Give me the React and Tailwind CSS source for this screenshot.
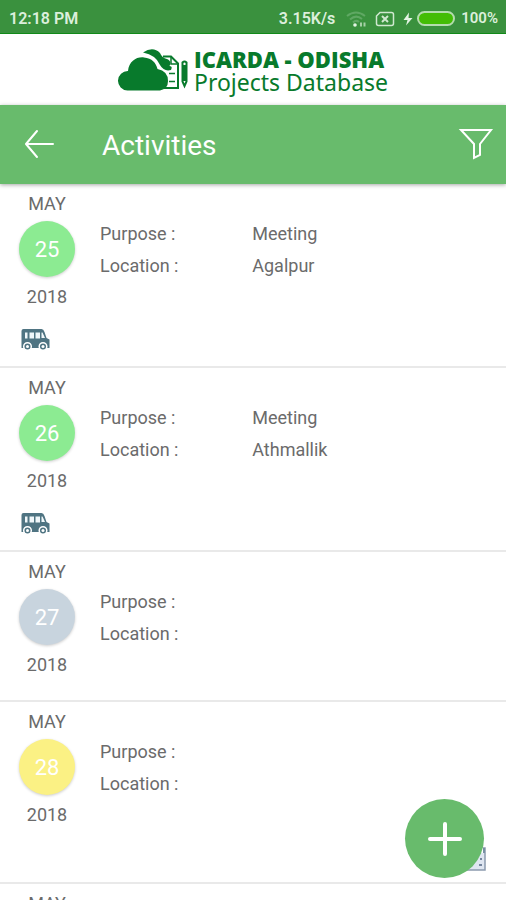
import React from "react";

const activities = [
  { day: 25, color: "bg-[#8ceb92]", purpose: "Meeting", location: "Agalpur", icon: "van" },
  { day: 26, color: "bg-[#8ceb92]", purpose: "Meeting", location: "Athmallik", icon: "van" },
  { day: 27, color: "bg-[#c8d4de]", purpose: "", location: "", icon: null },
  { day: 28, color: "bg-[#fbf184]", purpose: "", location: "", icon: "calendar" },
  { day: 29, color: "bg-[#8ceb92]", purpose: "", location: "", icon: null },
];

function StatusBar() {
  return (
    <div className="flex h-[34px] shrink-0 items-center justify-between border-b border-[#118a18] bg-[#3a913e] pt-1 pr-2 pl-[9px] text-base font-semibold text-[#dcefdc]">
      <span>12:18 PM</span>
      <div className="flex items-center">
        <span>3.15K/s</span>
        <svg className="ml-2.5 h-4 w-6" viewBox="0 0 24 16" fill="none" aria-hidden="true">
          <g stroke="#5fa863" strokeWidth="2">
            <path d="M2 5Q11-2 20 5" />
            <path d="M5 8.500Q11 3 17 8" />
            <path d="M8 11.500Q11 8.500 14 11" />
          </g>
          <circle cx="10" cy="14" r="1.800" fill="#e4f4e4" />
          <path d="M16 11.500v4M19.500 11.500v4" stroke="#a5d0a6" strokeWidth="2" />
        </svg>
        <svg className="ml-1.5 h-4 w-5" viewBox="0 0 20 16" fill="none" stroke="#d0e8d0" aria-hidden="true">
          <path d="M5 1.500h11.500a2 2 0 0 1 2 2v9a2 2 0 0 1-2 2h-13a2 2 0 0 1-2-2V5z" strokeWidth="1.500" />
          <path d="M7 5l6 6M13 5l-6 6" strokeWidth="2" />
        </svg>
        <svg className="ml-2 h-4 w-[10px]" viewBox="0 0 10 16" fill="#e4f4e4" aria-hidden="true">
          <path d="M6 1.500L.5 9h4L3 14.500 9.500 7H5.500z" />
        </svg>
        <div className="ml-1 h-[15px] w-[38px] rounded-full border-2 border-[#b4dcae] bg-[#43bd05]" />
        <span className="ml-1.5 text-[15px]">100%</span>
      </div>
    </div>
  );
}

function CloudLogo() {
  return (
    <svg className="h-[42px] w-[70px]" viewBox="0 0 70 42" aria-hidden="true">
      <path d="M45 7.500h8l7 7v24.500H46" fill="none" stroke="#087a2c" strokeWidth="2" />
      <path d="M53 8v7h7" fill="none" stroke="#087a2c" strokeWidth="1.500" />
      <path d="M51 24.500h6M51 32.500h6" stroke="#087a2c" strokeWidth="1.500" />
      <path d="M25 3.500Q35-3 42 4Q44 9 49 10Q54 12 51.500 17Q55 17 53 21Q46 23 42 16Q38 6 25 3.500z" fill="#087a2c" />
      <path d="M9.500 41.500A9.500 9.500 0 0 1 10 22C11 12 19 7.500 26 8.500C34 9 38 14 39.500 20Q50 22 50 32Q50 40 42 41.500z" fill="#087a2c" />
      <path d="M64.500 16V13.500q2-2 4 0v19L66.500 37l-2-4.500zM64.500 17h4M64.500 31h4M66.500 18v12" fill="none" stroke="#087a2c" strokeWidth="2" />
    </svg>
  );
}

function Brand() {
  return (
    <header className="flex h-[71px] shrink-0 items-center justify-center gap-[6px] bg-white text-[#087a2c]">
      <CloudLogo />
      <div className="flex flex-col pt-[2px]">
        <span className="font-['Open_Sans',sans-serif] text-[22px] leading-[22px] font-extrabold">ICARDA - ODISHA</span>
        <span className="font-['Noto_Sans',sans-serif] text-[23px] leading-[24px]">Projects Database</span>
      </div>
    </header>
  );
}

function AppBar() {
  return (
    <div className="relative z-10 flex h-[79px] shrink-0 items-center bg-[#68bb6c] pr-3 pl-6 text-white shadow-[0_1px_4px_rgba(0,0,0,0.35)]">
      <button type="button" aria-label="Back">
        <svg className="h-8 w-8" viewBox="0 0 32 32" fill="none" stroke="currentColor" strokeWidth="2" strokeLinecap="round" strokeLinejoin="round">
          <path d="M29 15H2M13 2L2 15l11 13" />
        </svg>
      </button>
      <h1 className="ml-[46px] flex-1 pt-0.5 text-[28px]">Activities</h1>
      <button type="button" aria-label="Filter">
        <svg className="h-9 w-9" viewBox="0 0 36 36" fill="none" stroke="currentColor" strokeWidth="2" strokeLinejoin="miter">
          <path d="M3 3h30L22 17v11l-6 3V17z" />
        </svg>
      </button>
    </div>
  );
}

function VanIcon() {
  return (
    <svg className="h-[22px] w-[30px]" viewBox="0 0 30 22" role="img" aria-label="Travel">
      <path d="M1.500 2q0-2 2-2h18q2 0 3 3l2 6 3 1.500V19h-28z" fill="#4f7482" />
      <path d="M5 3.500h2.500v6H5zM9.500 3.500H14v6H9.500zM15.500 3.500H20v6h-4.500zM21.500 3.500h1L25 9h-3.500z" fill="#f0f7fa" />
      <g fill="#4f7482" stroke="#fff" strokeWidth="1.500">
        <circle cx="7.500" cy="17.500" r="3.800" />
        <circle cx="23" cy="17.500" r="3.800" />
      </g>
      <circle cx="7.500" cy="17.500" r="1.500" fill="#fff" />
      <circle cx="23" cy="17.500" r="1.500" fill="#fff" />
    </svg>
  );
}

function CalendarIcon() {
  return (
    <svg className="h-6 w-6" viewBox="0 0 24 24" role="img" aria-label="Scheduled">
      <path d="M1 1h22v22H1z" fill="#dfe6f1" stroke="#8c9aae" strokeWidth="1.500" />
      <path d="M1 1h22v5H1z" fill="#7890a3" />
      <path d="M20 1v5" stroke="#fff" strokeWidth="2" />
      <path d="M5 12h2M10 12h2M18 12h2M5 16h2M10 16h2M17 18h3" stroke="#75869f" strokeWidth="2" />
    </svg>
  );
}

function ActivityRow({ activity }) {
  return (
    <li className="flex flex-col border-b-2 border-[#e9e9e9] text-lg text-[#6b6b6b]">
      <div className="flex pt-2">
        <div className="flex w-[94px] shrink-0 flex-col items-center leading-6">
          <span>MAY</span>
          <span className={"mt-[5px] mb-2 flex h-14 w-14 items-center justify-center rounded-full pt-0.5 text-[22px] text-white shadow-[0_1px_3px_rgba(0,0,0,0.2)] " + activity.color}>
            {activity.day}
          </span>
          <span>2018</span>
        </div>
        <dl className="ml-[6px] grid flex-1 grid-cols-[3fr_5fr] content-start pt-[26px] leading-8">
          <dt>Purpose :</dt>
          <dd>{activity.purpose}</dd>
          <dt>Location :</dt>
          <dd>{activity.location}</dd>
        </dl>
      </div>
      {activity.icon === "van" && (
        <div className="flex px-5 pt-5 pb-[15px]">
          <VanIcon />
        </div>
      )}
      {activity.icon === "calendar" && (
        <div className="flex justify-end px-5 pt-5 pb-[11px]">
          <CalendarIcon />
        </div>
      )}
      {!activity.icon && <div className="h-[23px]" />}
    </li>
  );
}

export default function App() {
  return (
    <div className="relative flex h-screen flex-col overflow-hidden bg-white font-[Roboto,sans-serif]">
      <StatusBar />
      <Brand />
      <AppBar />
      <ul className="min-h-0 flex-1 overflow-hidden">
        {activities.map((activity) => (
          <ActivityRow key={activity.day} activity={activity} />
        ))}
      </ul>
      <button
        type="button"
        aria-label="Add activity"
        className="absolute right-[22px] bottom-[22px] flex h-[79px] w-[79px] items-center justify-center rounded-full bg-[#68bb6c] text-white"
      >
        <svg className="h-9 w-9" viewBox="0 0 36 36" fill="none" stroke="currentColor" strokeWidth="4" strokeLinecap="round">
          <path d="M18 3v30M3 18h30" />
        </svg>
      </button>
    </div>
  );
}
